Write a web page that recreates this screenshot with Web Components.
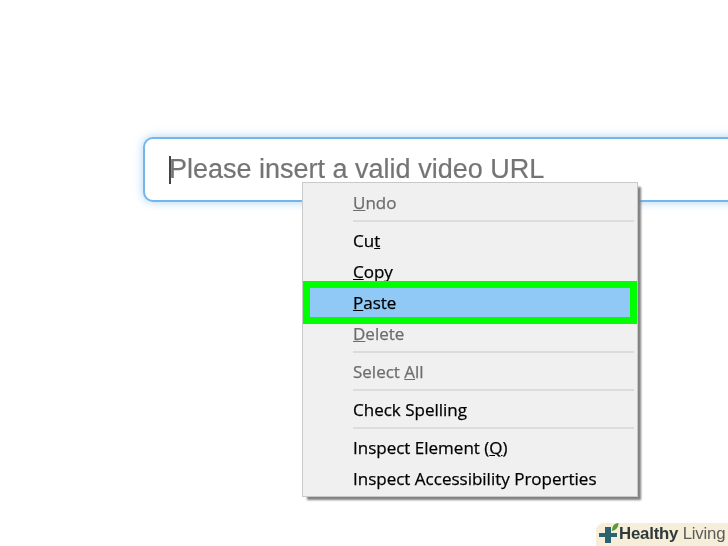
<!DOCTYPE html>
<html>
<head>
<meta charset="utf-8">
<style>
  html, body { margin: 0; background: #fff; }
</style>
</head>
<body>
<video-page>
  <url-field>Please insert a valid video URL</url-field>
  <context-menu>
    <menu-item disabled><u>U</u>ndo</menu-item>
    <menu-sep></menu-sep>
    <menu-item>Cu<u>t</u></menu-item>
    <menu-item><u>C</u>opy</menu-item>
    <menu-item marked><u>P</u>aste</menu-item>
    <menu-item disabled><u>D</u>elete</menu-item>
    <menu-sep></menu-sep>
    <menu-item disabled>Select <u>A</u>ll</menu-item>
    <menu-sep></menu-sep>
    <menu-item>Check Spellin<u>g</u></menu-item>
    <menu-sep></menu-sep>
    <menu-item>Inspect Element (<u>Q</u>)</menu-item>
    <menu-item>Inspect Accessibility Properties</menu-item>
  </context-menu>
  <brand-mark></brand-mark>
</video-page>

<script>
class VideoPage extends HTMLElement {
  constructor() {
    super();
    this.attachShadow({mode: 'open'});
    this.shadowRoot.innerHTML = `
    <style>
      :host {
        display: flex;
        flex-direction: column;
        position: relative;
        width: 728px;
        height: 546px;
        padding-top: 137px;
        box-sizing: border-box;
        overflow: hidden;
        background: #fff;
        filter: blur(.3px);
      }
    </style>
    <slot></slot>
    `;
  }
}

class UrlField extends HTMLElement {
  constructor() {
    super();
    this.attachShadow({mode: 'open'});
    this.shadowRoot.innerHTML = `
    <style>
      :host {
        display: flex;
        align-items: center;
        flex: none;
        width: 640px;
        height: 65px;
        margin-left: 143px;
        padding-left: 24px;
        box-sizing: border-box;
        border: 2px solid #74b6ea;
        border-radius: 10px;
        box-shadow: 0 0 10px rgba(102, 175, 233, .55);
        font: 27px "Liberation Sans", Arial, sans-serif;
        -webkit-text-stroke: .2px #777;
        color: #747474;
        background: #fff;
      }
      .caret {
        width: 1.5px;
        height: 28px;
        margin-right: -1.5px;
        background: #444;
      }
    </style>
    <span class="caret"></span>
    <slot></slot>
    `;
  }
}

class ContextMenu extends HTMLElement {
  constructor() {
    super();
    this.attachShadow({mode: 'open'});
    this.shadowRoot.innerHTML = `
    <style>
      :host {
        display: block;
        position: absolute;
        left: 302px;
        top: 182px;
        width: 336px;
        height: 315px;
        padding: 3.5px 0;
        box-sizing: border-box;
        border: 1px solid #c9c9c9;
        background: #f0f0f0;
        box-shadow: 4px 4px 2px -1px #808080;
        font: 17px "Open Sans", "Noto Sans", sans-serif;
        -webkit-text-stroke: .25px currentColor;
        color: #000;
      }
    </style>
    <slot></slot>
    `;
  }
}

class MenuItem extends HTMLElement {
  constructor() {
    super();
    this.attachShadow({mode: 'open'});
    this.shadowRoot.innerHTML = `
    <style>
      :host {
        display: flex;
        align-items: center;
        height: 31px;
        padding-left: 50px;
        white-space: pre;
      }
      :host([disabled]) { color: #6d6d6d; }
      :host([marked]) {
        position: relative;
        z-index: 1;
        height: 29px;
        margin: 1px 7px;
        padding-left: 43px;
        background: #90c8f6;
        outline: 7px solid #00ff00;
      }
    </style>
    <span><slot></slot></span>
    `;
  }
}

class MenuSep extends HTMLElement {
  constructor() {
    super();
    this.attachShadow({mode: 'open'});
    this.shadowRoot.innerHTML = `
    <style>
      :host {
        display: block;
        height: 2px;
        margin: 2px 3px 3px 50px;
        background: #dcdcdc;
      }
    </style>
    `;
  }
}

class BrandMark extends HTMLElement {
  constructor() {
    super();
    this.attachShadow({mode: 'open'});
    this.shadowRoot.innerHTML = `
    <style>
      :host {
        display: flex;
        align-items: center;
        align-self: flex-end;
        flex: none;
        width: 132px;
        height: 23px;
        margin-top: auto;
        border-radius: 8px 0 0 0;
        background: #f6eed9;
        font: 16.8px "Liberation Sans", Arial, sans-serif;
        color: #5a5a5a;
        white-space: nowrap;
      }
      svg { flex: none; align-self: flex-start; margin: -2px 0 0 2px; }
      b { color: #2f3a3a; }
      span { letter-spacing: -.2px; margin-top: -1px; }
    </style>
    <svg width="21" height="26" viewBox="0 0 21 26">
      <path d="M7 6h6v6h6v4h-6v6H7v-6H1v-4h6z" fill="#2c6270"/>
      <path d="M14 10C14 5 16 2.500 20.500 2c0 4-2 7-6.500 8z" fill="#5b9a3c"/>
    </svg>
    <span><b>Healthy</b> Living</span>
    `;
  }
}

customElements.define('video-page', VideoPage);
customElements.define('url-field', UrlField);
customElements.define('context-menu', ContextMenu);
customElements.define('menu-item', MenuItem);
customElements.define('menu-sep', MenuSep);
customElements.define('brand-mark', BrandMark);
</script>
</body>
</html>
